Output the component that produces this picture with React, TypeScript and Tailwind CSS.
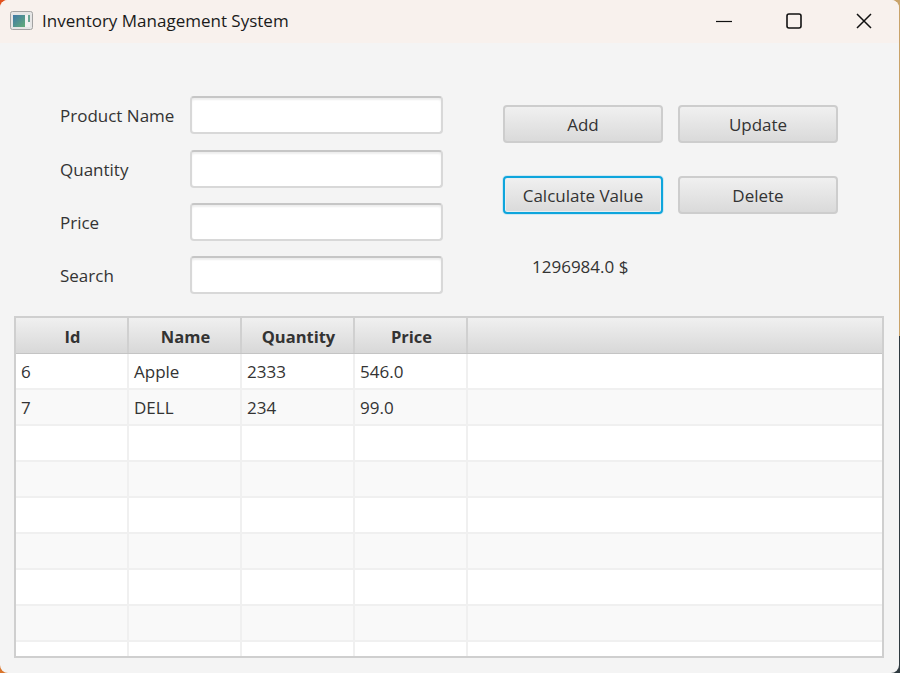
const fields = [
  { label: 'Product Name', mb: 'mb-[16px]' },
  { label: 'Quantity', mb: 'mb-[15px]' },
  { label: 'Price', mb: 'mb-[15px]' },
  { label: 'Search', mb: '' },
]

const columns = ['Id', 'Name', 'Quantity', 'Price']

const rows = [
  ['6', 'Apple', '2333', '546.0'],
  ['7', 'DELL', '234', '99.0'],
  ['', '', '', ''],
  ['', '', '', ''],
  ['', '', '', ''],
  ['', '', '', ''],
  ['', '', '', ''],
  ['', '', '', ''],
  ['', '', '', ''],
]

function FxButton({ label, focused = false }: { label: string; focused?: boolean }) {
  return (
    <button
      className={
        'w-[160px] h-[38px] pt-[1px] rounded-[4px] text-[17px] text-[#333333] bg-gradient-to-b from-[#f0f0f0] to-[#dadada] ' +
        (focused
          ? 'border-2 border-[#0ea5dc] shadow-[0_0_0_1px_#cfe8f3,inset_0_0_0_1px_#e8eef1]'
          : 'border-2 border-[#cdcdcd]')
      }
    >
      {label}
    </button>
  )
}

function WindowIcon() {
  return (
    <svg width="23" height="19" viewBox="0 0 23 19">
      <defs>
        <linearGradient id="ico" x1="0" y1="0" x2="1" y2="1">
          <stop offset="0" stopColor="#3f78a8" />
          <stop offset="1" stopColor="#62ad78" />
        </linearGradient>
      </defs>
      <rect x="0.5" y="0.5" width="22" height="18" rx="2" fill="#e6e6e6" stroke="#a2a2a2" />
      <rect x="3" y="4" width="12" height="12" fill="url(#ico)" />
      <rect x="15" y="4" width="5" height="12" fill="#f2f2f2" />
      <rect x="18" y="4" width="2" height="7" fill="#6aa694" />
    </svg>
  )
}

export default function App() {
  return (
    <div className="w-[900px] h-[673px] overflow-hidden bg-[conic-gradient(#c9a36a_0_25%,#2f3a40_25%_50%,#d9752c_50%_75%,#e2521f_75%_100%)] font-['Open_Sans',sans-serif]">
      <div className="w-[899px] h-[673px] rounded-[8px] overflow-hidden bg-[#f4f4f4] flex flex-col">
        {/* title bar */}
        <div className="h-[43px] shrink-0 bg-[#f8f1ed] flex items-center pl-[10px] pb-[2px]">
          <WindowIcon />
          <span className="ml-[9px] text-[17px] text-[#1a1a1a]">Inventory Management System</span>
          <div className="ml-auto flex items-center">
            <svg width="16" height="16" viewBox="0 0 16 16" className="mr-[54px]">
              <path d="M0 8.5H16" stroke="#111" strokeWidth="1.2" />
            </svg>
            <svg width="16" height="16" viewBox="0 0 16 16" className="mr-[54px]">
              <rect x="1" y="1" width="14" height="14" rx="2" fill="none" stroke="#111" strokeWidth="1.6" />
            </svg>
            <svg width="16" height="16" viewBox="0 0 16 16" className="mr-[27px]">
              <path d="M1 1L15 15M15 1L1 15" stroke="#111" strokeWidth="1.5" />
            </svg>
          </div>
        </div>

        {/* form and buttons */}
        <div className="flex pt-[53px] pl-[60px]">
          <div className="w-[383px]">
            {fields.map((f) => (
              <div key={f.label} className={'flex items-center ' + f.mb}>
                <span className="w-[130px] pt-[2px] text-[17px] text-[#333333]">{f.label}</span>
                <input className="w-[253px] h-[38px] rounded-[4px] border-2 border-[#d8d8d8] border-t-[#c6c6c6] bg-white shadow-[inset_0_2px_2px_#eeeeee] outline-none" />
              </div>
            ))}
          </div>
          <div className="ml-[60px] pt-[9px]">
            <div className="flex gap-[15px]">
              <FxButton label="Add" />
              <FxButton label="Update" />
            </div>
            <div className="flex gap-[15px] mt-[33px]">
              <FxButton label="Calculate Value" focused />
              <FxButton label="Delete" />
            </div>
            <div className="mt-[40px] pl-[29px] text-[17px] leading-[26px] text-[#333333]">1296984.0 $</div>
          </div>
        </div>

        {/* table */}
        <div className="mt-[22px] ml-[14px] w-[870px] h-[342px] border-2 border-[#cfcfcf] bg-white overflow-hidden">
          <div className="flex h-[36px] bg-gradient-to-b from-[#f0f0f0] to-[#d8d8d8] border-b border-[#c4c4c4]">
            {columns.map((c) => (
              <div
                key={c}
                className="w-[113px] flex items-center justify-center pl-[2px] pt-[3px] border-r-2 border-[#d0d0d0] text-[16.5px] font-bold text-[#333333]"
              >
                {c}
              </div>
            ))}
          </div>
          {rows.map((row, i) => (
            <div
              key={i}
              className={'flex h-[36px] border-b-2 border-[#f0f0f0] ' + (i % 2 === 1 ? 'bg-[#f9f9f9]' : 'bg-white')}
            >
              {row.map((cell, j) => (
                <div
                  key={j}
                  className="w-[113px] flex items-center pl-[5px] pt-[2px] border-r-2 border-[#f0f0f0] text-[17px] text-[#333333]"
                >
                  {cell}
                </div>
              ))}
            </div>
          ))}
        </div>
      </div>
    </div>
  )
}
